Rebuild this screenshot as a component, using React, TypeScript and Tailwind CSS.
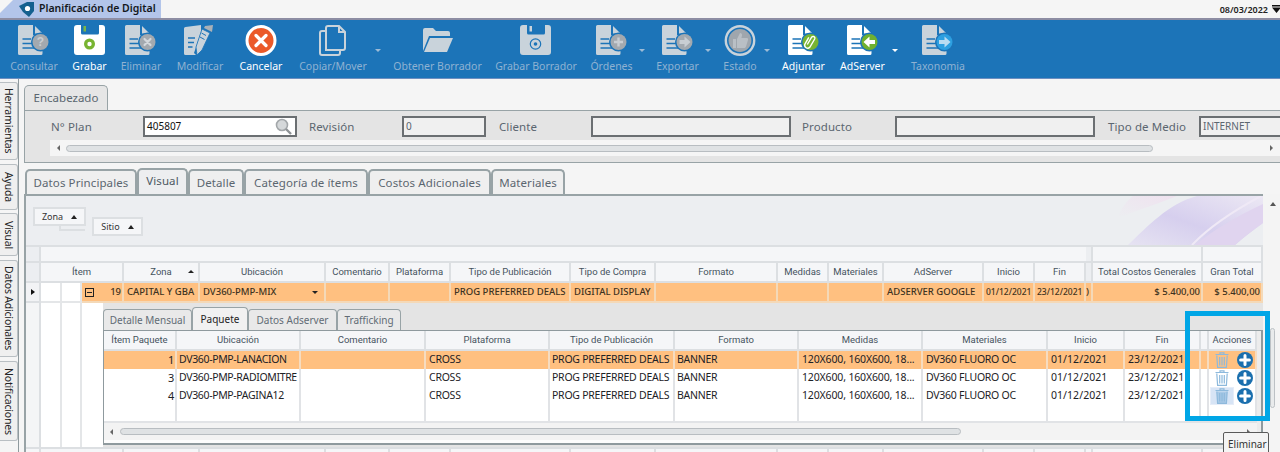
import React from "react";

const OFF = "#c9d3db";
const BLUE = "#1c74b8";

function Doc({ color, children }: { color: string; children?: React.ReactNode }) {
  return (
    <svg width="32" height="31" viewBox="0 0 32 31">
      <path d="M1.5 0H15V10H24.5V28.5a1.5 1.5 0 0 1-1.5 1.5H1.5A1.5 1.5 0 0 1 0 28.5V1.5A1.5 1.5 0 0 1 1.5 0z" fill={color} />
      <path d="M17 1L24.5 8.5H17z" fill={color} />
      <path d="M4.5 14H13M4.5 18.5H15M4.5 23H18" stroke={BLUE} strokeWidth="1.6" />
      <circle cx="22.5" cy="17" r="9.5" fill={BLUE} />
      {children}
    </svg>
  );
}

function IconConsultar() {
  return (
    <Doc color={OFF}>
      <circle cx="22.5" cy="17" r="8" fill="#a3a9af" />
      <text x="22.5" y="21" textAnchor="middle" fontSize="12" fontWeight="700" fill="#c9ced3" fontFamily="Liberation Sans, sans-serif">?</text>
    </Doc>
  );
}
function IconEliminar() {
  return (
    <Doc color={OFF}>
      <circle cx="22.5" cy="17" r="8" fill="#a3a9af" />
      <path d="M19.5 14l6 6M25.5 14l-6 6" stroke="#d4d8dc" strokeWidth="2.2" strokeLinecap="round" />
    </Doc>
  );
}
function IconOrdenes() {
  return (
    <Doc color={OFF}>
      <circle cx="22.5" cy="17" r="8" fill="#a3a9af" />
      <path d="M22.5 12.5v9M18 17h9" stroke="#c9ced3" strokeWidth="2.4" />
    </Doc>
  );
}
function IconExportar() {
  return (
    <Doc color={OFF}>
      <circle cx="22.5" cy="17" r="8" fill="#a3a9af" />
      <path d="M17.5 15h5v-3.5l6 5.5-6 5.5V19h-5z" fill="#c9ced3" />
    </Doc>
  );
}
function IconAdjuntar() {
  return (
    <Doc color="#ffffff">
      <circle cx="22.5" cy="17" r="8" fill="#78b431" />
      <path d="M20.5 20.5l4.5-7.5a1.8 1.8 0 0 1 3 1.8l-5 8.5a3 3 0 0 1-5-3l4-7" fill="none" stroke="#ffffff" strokeWidth="1.4" transform="translate(-1.2 -1)" />
    </Doc>
  );
}
function IconAdServer() {
  return (
    <Doc color="#ffffff">
      <circle cx="22.5" cy="17" r="8" fill="#6fb02f" />
      <path d="M28 15h-5.5v-3.5L16.5 17l6 5.5V19H28z" fill="#ffffff" />
    </Doc>
  );
}
function IconTaxonomia() {
  return (
    <Doc color={OFF}>
      <circle cx="22.5" cy="17" r="8" fill="#2d9fe0" />
      <path d="M17 15h5.5v-3.5l6 5.5-6 5.5V19H17z" fill="#b9dcf2" />
    </Doc>
  );
}
function IconModificar() {
  return (
    <svg width="32" height="31" viewBox="0 0 32 31">
      <path d="M1.5 2L17 0V7L10 28 12 30H1.5A1.5 1.5 0 0 1 0 28.5V3.5A1.5 1.5 0 0 1 1.5 2z" fill={OFF} />
      <path d="M4 13H11M4 17.5H10M4 22H8.5" stroke={BLUE} strokeWidth="1.6" />
      <path d="M18 4L26 8 18 25 13 30 12 22z" fill={OFF} stroke={BLUE} strokeWidth="0.8" />
      <path d="M21 1L29 0 28 7 20 3z" fill="#a9b1b8" />
      <path d="M17.5 8L22 10.5M16 12L20.5 14.5" stroke={BLUE} strokeWidth="1" />
    </svg>
  );
}
function IconFloppy({ white }: { white?: boolean }) {
  const c = white ? "#ffffff" : OFF;
  return (
    <svg width="32" height="31" viewBox="0 0 32 31">
      <path d="M3 0H7V8a1.5 1.5 0 0 0 1.5 1.5H23.5A1.5 1.5 0 0 0 25 8V0H28A3 3 0 0 1 31 3V27A3 3 0 0 1 28 30H3A3 3 0 0 1 0 27V3A3 3 0 0 1 3 0z" fill={c} />
      <rect x="9.5" y="1" width="2.5" height="5.5" fill={white ? "#7ab648" : OFF} />
      {white ? (
        <>
          <circle cx="15.5" cy="19" r="5.5" fill="#78b431" />
          <circle cx="15.5" cy="19" r="2.2" fill="#ffffff" />
        </>
      ) : (
        <>
          <circle cx="15.5" cy="19" r="5.2" fill="none" stroke={BLUE} strokeWidth="1.2" />
          <circle cx="15.5" cy="19" r="1.8" fill={BLUE} />
        </>
      )}
    </svg>
  );
}
function IconCancelar() {
  return (
    <svg width="32" height="31" viewBox="0 0 32 31">
      <circle cx="16" cy="15.5" r="14" fill="#eb5a2a" stroke="#ffffff" strokeWidth="3" />
      <path d="M11 10.5l10 10M21 10.5l-10 10" stroke="#ffffff" strokeWidth="3.2" strokeLinecap="round" />
    </svg>
  );
}
function IconCopiar() {
  return (
    <svg width="28" height="31" viewBox="0 0 28 31" fill="none" stroke={OFF} strokeWidth="2">
      <path d="M7 25V3a2 2 0 0 1 2-2H20L26 7V23a2 2 0 0 1-2 2z" />
      <path d="M20 1V7H26" />
      <path d="M7 6H3a2 2 0 0 0-2 2V28a2 2 0 0 0 2 2H19a2 2 0 0 0 2-2V25" />
    </svg>
  );
}
function IconFolder() {
  return (
    <svg width="32" height="31" viewBox="0 0 32 31">
      <path d="M1 26V5a2 2 0 0 1 2-2H11L14 6H26a2 2 0 0 1 2 2V11H7L1 26z" fill={OFF} />
      <path d="M8 13H31L25 27H2z" fill={OFF} />
    </svg>
  );
}
function IconEstado() {
  return (
    <svg width="32" height="31" viewBox="0 0 32 31">
      <circle cx="16" cy="15.5" r="14.2" fill="none" stroke={OFF} strokeWidth="2.4" />
      <circle cx="16" cy="15.5" r="11.4" fill="#9fa6ad" />
      <path d="M9 14h3v9H9zM13 14l3-6c1.5 0 2.3 1 2 2.5l-.6 2.5H23c1 0 1.4 1 1 2l-2 6.5c-.2.8-.8 1.5-1.7 1.5H13z" fill="#b9bfc5" />
    </svg>
  );
}

type Tool = { label: string; w: string; on?: boolean; caret?: boolean; icon: React.ReactNode };
const tools: Tool[] = [
  { label: "Consultar", w: "w-[48px]", icon: <IconConsultar /> },
  { label: "Grabar", w: "w-[33px]", on: true, icon: <IconFloppy white /> },
  { label: "Eliminar", w: "w-[40px]", icon: <IconEliminar /> },
  { label: "Modificar", w: "w-[48px]", icon: <IconModificar /> },
  { label: "Cancelar", w: "w-[44px]", on: true, icon: <IconCancelar /> },
  { label: "Copiar/Mover", w: "w-[70px] mr-[11px]", caret: true, icon: <IconCopiar /> },
  { label: "Obtener Borrador", w: "w-[87px]", icon: <IconFolder /> },
  { label: "Grabar Borrador", w: "w-[80px]", icon: <IconFloppy /> },
  { label: "Órdenes", w: "w-[41px] mr-[10px]", caret: true, icon: <IconOrdenes /> },
  { label: "Exportar", w: "w-[41px] mr-[10px]", caret: true, icon: <IconExportar /> },
  { label: "Estado", w: "w-[34px] mr-[10px]", caret: true, icon: <IconEstado /> },
  { label: "Adjuntar", w: "w-[43px]", on: true, icon: <IconAdjuntar /> },
  { label: "AdServer", w: "w-[45px] mr-[10px]", on: true, caret: true, icon: <IconAdServer /> },
  { label: "Taxonomia", w: "w-[56px]", icon: <IconTaxonomia /> },
];

function TopBar() {
  return (
    <div className="h-[18px] flex items-start justify-between bg-[#f5f5f5]">
      <div className="h-[18px] w-[161px] bg-[#b3c5ea] [clip-path:polygon(0_13px,13px_0,100%_0,100%_100%,0_100%)] flex items-center pl-[19px] gap-[5px]">
        <svg width="15" height="15" viewBox="0 0 15 15">
          <path d="M0 4L8 0H15V9L10 15L4 10z" fill="#14608f" />
          <circle cx="8.5" cy="6.5" r="2.6" fill="#ffffff" />
        </svg>
        <span className="text-[10.5px] font-semibold text-[#14181c] whitespace-nowrap">Planificación de Digital</span>
      </div>
      <div className="flex items-center h-[18px] gap-[4px]">
        <span className="text-[9px] text-[#222] font-semibold mt-[1px]">08/03/2022</span>
        <svg width="9" height="8" viewBox="0 0 9 8" className="-mr-[1px]">
          <path d="M0 0H9V1.5H0zM0 2.5H9L4.5 8z" fill="#111" />
        </svg>
      </div>
    </div>
  );
}

function Toolbar() {
  return (
    <div className="h-[61px] bg-[#1c74b8] border-t-2 border-b border-t-[#8d8da3] border-b-[#6d8fc0] flex pl-[10px] gap-[15px] pt-[5px]">
      {tools.map((t) => (
        <div key={t.label} className={`relative ${t.w} shrink-0 flex flex-col items-center`}>
          <div className="h-[31px] flex items-center justify-center">{t.icon}</div>
          <div className={`mt-[3px] text-[10.5px] leading-[15px] whitespace-nowrap ${t.on ? "text-white" : "text-[#8fb2d2]"}`}>{t.label}</div>
          {t.caret && (
            <span className={`absolute right-[-13px] top-[24px] w-0 h-0 border-x-[3px] border-x-transparent border-t-[3px] ${t.on ? "border-t-white" : "border-t-[#9dbbd6]"}`} />
          )}
        </div>
      ))}
    </div>
  );
}

function SideTab({ label, h }: { label: string; h: string }) {
  return (
    <div className={`${h} w-[18px] bg-[#efefef] border border-l-0 border-[#b9bfc3] rounded-r-[3px] flex items-center justify-center [writing-mode:vertical-rl]`}>
      <span className="text-[10.5px] tracking-[-0.2px] text-[#222] whitespace-nowrap">{label}</span>
    </div>
  );
}

function Sidebar() {
  return (
    <div className="w-[19px] shrink-0 border-r border-[#8f9a9e] pt-[3px] flex flex-col">
      <SideTab label="Herramientas" h="h-[78px]" />
      <div className="h-[4px]" />
      <SideTab label="Ayuda" h="h-[46px]" />
      <div className="h-[3px]" />
      <SideTab label="Visual" h="h-[43px]" />
      <div className="h-[4px]" />
      <SideTab label="Datos Adicionales" h="h-[97px]" />
      <div className="h-[4px]" />
      <SideTab label="Notificaciones" h="h-[80px]" />
    </div>
  );
}

function HScroll({ left, width, strip }: { left: string; width: string; strip: string }) {
  return (
    <div className={`flex items-center ${strip}`}>
      <span className={`w-0 h-0 border-y-[3px] border-y-transparent border-r-[3px] border-r-[#666] ${left}`} />
      <div className={`h-[7px] ${width} rounded-full bg-[#dfe2e4] border border-[#b8bdc1]`} />
      <span className="ml-auto w-0 h-0 border-y-[3px] border-y-transparent border-l-[3px] border-l-[#666] mr-[7px]" />
    </div>
  );
}

const labelCls = "text-[11.5px] tracking-[0.1px] text-[#5b6670] whitespace-nowrap";
const inputCls = "h-[21px] border-2 border-[#6b6f72] bg-[#f0f0f0] text-[10px] text-[#5b6670] pl-[2px] flex items-center shrink-0";

function Encabezado() {
  return (
    <div className="pl-[5px] pt-[6px]">
      <div className="w-[84px] h-[25px] bg-[#e6e6e6] border border-b-0 border-[#98a3a6] rounded-t-[5px] flex items-center justify-center">
        <span className="text-[11.5px] text-[#5b6670]">Encabezado</span>
      </div>
      <div className="h-[53px] bg-[#e4e4e4] border-t border-b border-l border-[#98a3a6]">
        <div className="h-[29px] pt-[2px] flex items-center pl-[26px]">
          <span className={`${labelCls} w-[92px]`}>N° Plan</span>
          <div className={`${inputCls} w-[154px] bg-white text-[#111] justify-between pr-[3px]`}>
            <span className="text-[10px]">405807</span>
            <svg width="17" height="17" viewBox="0 0 17 17">
              <circle cx="7" cy="7" r="5.5" fill="#d5d8da" stroke="#a3a7aa" strokeWidth="1.6" />
              <path d="M11 11l5 5" stroke="#8e9295" strokeWidth="2.4" />
            </svg>
          </div>
          <span className={`${labelCls} w-[93px] ml-[12px]`}>Revisión</span>
          <div className={`${inputCls} w-[84px]`}>0</div>
          <span className={`${labelCls} w-[92px] ml-[13px]`}>Cliente</span>
          <div className={`${inputCls} w-[200px]`} />
          <span className={`${labelCls} w-[93px] ml-[11px]`}>Producto</span>
          <div className={`${inputCls} w-[200px]`} />
          <span className={`${labelCls} w-[91px] ml-[13px]`}>Tipo de Medio</span>
          <div className={`${inputCls} w-[81px] border-r-0`}>INTERNET</div>
        </div>
        <HScroll strip="h-[16px] ml-[25px] bg-[#f5f5f5]" left="ml-[7px] mr-[6px]" width="w-[1087px]" />
      </div>
    </div>
  );
}

const mainTabs = [
  { t: "Datos Principales", w: "w-[112px]" },
  { t: "Visual", w: "w-[51px]", on: true },
  { t: "Detalle", w: "w-[56px]" },
  { t: "Categoría de ítems", w: "w-[124px]" },
  { t: "Costos Adicionales", w: "w-[123px]" },
  { t: "Materiales", w: "w-[74px]" },
];

const MCOLS = "grid-cols-[15px_83px_76px_126px_64px_61px_120px_85px_122px_51px_55px_100px_51px_51px_7px_110px_60px]";
const ICOLS = "grid-cols-[73px_124px_125px_124px_125px_124px_124px_125px_77px_76px_8px_48px]";

const mHeaders = ["", "Ítem", "Zona", "Ubicación", "Comentario", "Plataforma", "Tipo de Publicación", "Tipo de Compra", "Formato", "Medidas", "Materiales", "AdServer", "Inicio", "Fin", "", "Total Costos Generales", "Gran Total"];
const iHeaders = ["Ítem Paquete", "Ubicación", "Comentario", "Plataforma", "Tipo de Publicación", "Formato", "Medidas", "Materiales", "Inicio", "Fin", "", "Acciones"];

const hCell = "h-full border-r-2 border-b-2 border-[#dcdfe2] flex items-center justify-center [font-family:Roboto,sans-serif] text-[9.5px] text-[#45535e] whitespace-nowrap overflow-hidden";

function MasterCell({ children, cls = "" }: { children?: React.ReactNode; cls?: string }) {
  return (
    <div className={`h-full border-r-2 border-b-2 border-[#f4d9b8] bg-[#ffc080] flex items-center text-[9.5px] font-medium text-[#3d3221] whitespace-nowrap overflow-hidden ${cls}`}>
      {children}
    </div>
  );
}

function Trash({ hot }: { hot?: boolean }) {
  return (
    <div className={`w-[24px] h-[18px] flex items-center justify-center ${hot ? "bg-[#d7e4f5] border border-[#e6edf8]" : ""}`}>
      <svg width="14" height="16" viewBox="0 0 14 16" fill="none" stroke="#8db9dc" strokeWidth="1.2">
        <path d="M0.5 2.5H13.5M5 2.5V0.8H9V2.5" />
        <path d="M1.8 3.5L2.6 15.3H11.4L12.2 3.5" fill={hot ? "#a9c9e6" : "none"} />
        <path d="M4.7 5V13.5M7 5V13.5M9.3 5V13.5" />
      </svg>
    </div>
  );
}

function PlusCircle() {
  return (
    <svg width="16" height="16" viewBox="0 0 16 16" className="ml-[3px]">
      <circle cx="8" cy="8" r="8" fill="#1a6fae" />
      <path d="M8 3.6V12.4M3.6 8H12.4" stroke="#ffffff" strokeWidth="3" strokeLinecap="round" />
    </svg>
  );
}

const rows = [
  { n: "1", u: "DV360-PMP-LANACION", on: true },
  { n: "3", u: "DV360-PMP-RADIOMITRE" },
  { n: "4", u: "DV360-PMP-PAGINA12", hot: true },
];

function InnerCell({ children, on, cls = "" }: { children?: React.ReactNode; on?: boolean; cls?: string }) {
  return (
    <div className={`h-full border-r-2 border-b-2 flex items-center text-[10.5px] tracking-[-0.25px] text-[#1d2226] whitespace-nowrap overflow-hidden ${on ? "bg-[#ffc080] border-[#f6dcc0]" : "bg-white border-[#e1e3e6]"} ${cls}`}>
      {children}
    </div>
  );
}

function DetailPanel() {
  const detailTabs = [
    { t: "Detalle Mensual", w: "w-[89px]" },
    { t: "Paquete", w: "w-[56px]", on: true },
    { t: "Datos Adserver", w: "w-[89px]" },
    { t: "Trafficking", w: "w-[64px]" },
  ];
  return (
    <div className="w-[1160px] h-[144px] bg-[#e4e4e4] shrink-0">
      <div className="h-[27px] flex items-end">
        {detailTabs.map((d) => (
          <div key={d.t} className={`${d.w} ${d.on ? "h-[23px] bg-[#f1f1f1] text-[#222]" : "h-[21px] bg-[#e9e9e9] text-[#626c75]"} border border-b-0 border-[#98a3a6] rounded-t-[4px] flex items-center justify-center text-[10px] whitespace-nowrap`}>
            {d.t}
          </div>
        ))}
      </div>
      <div className="h-[115px] w-[1160px] border-t border-l border-b-2 border-r-2 border-[#8f9a9e] flex">
        <div className="w-[1153px] shrink-0 bg-[#fdfdfd]">
          <div className={`grid ${ICOLS} h-[20px] bg-[#f5f6f8]`}>
            {iHeaders.map((h, i) => (
              <div key={i} className={hCell}>{h}</div>
            ))}
          </div>
          {rows.map((r) => (
            <div key={r.n} className={`grid ${ICOLS} h-[18px]`}>
              <InnerCell on={r.on} cls="justify-end pr-[1px]"><span className="text-[11px]">{r.n}</span></InnerCell>
              <InnerCell on={r.on} cls="pl-[2px] !tracking-[-0.35px]">{r.u}</InnerCell>
              <InnerCell on={r.on} />
              <InnerCell on={r.on} cls="pl-[3px]">CROSS</InnerCell>
              <InnerCell on={r.on} cls="pl-[2px]">PROG PREFERRED DEALS</InnerCell>
              <InnerCell on={r.on} cls="pl-[2px]">BANNER</InnerCell>
              <InnerCell on={r.on} cls="pl-[3px] !tracking-[-0.15px]">120X600, 160X600, 18...</InnerCell>
              <InnerCell on={r.on} cls="pl-[3px]">DV360 FLUORO OC</InnerCell>
              <InnerCell on={r.on} cls="pl-[3px] !tracking-[0.05px]">01/12/2021</InnerCell>
              <InnerCell on={r.on} cls="pl-[3px] !tracking-[0.05px]">23/12/2021</InnerCell>
              <InnerCell on={r.on} />
              <InnerCell on={r.on} cls="pl-[1px] !overflow-visible"><Trash hot={r.hot} /><PlusCircle /></InnerCell>
            </div>
          ))}
          <div className={`grid ${ICOLS} h-[18px]`}>
            {iHeaders.map((h, i) => (
              <InnerCell key={i} />
            ))}
          </div>
          <HScroll strip="h-[17px] bg-[#f3f3f3]" left="ml-[6px] mr-[7px]" width="w-[841px]" />
        </div>
        <div className="flex-1 bg-[#ececec]" />
      </div>
    </div>
  );
}

function Visual() {
  return (
    <div className="pl-[5px] pt-[5px]">
      <div className="flex items-end h-[26px] pl-px">
        {mainTabs.map((m) => (
          <div key={m.t} className={`${m.w} ${m.on ? "h-[26px] bg-[#edeef0] text-[#4e5963] pb-[2px]" : "h-[25px] bg-[#efefef] text-[#5b6670]"} border-2 border-b-0 border-[#98a3a6] rounded-t-[5px] flex items-center justify-center text-[11.5px] tracking-[0.1px] whitespace-nowrap`}>
            {m.t}
          </div>
        ))}
      </div>
      <div className="flex">
        <div className="w-[1239px] shrink-0 border-t-2 border-l-2 border-[#98a3a6]">
          <div className="relative h-[49px] bg-[#eceef1] flex items-start pl-[7px] overflow-hidden">
            <svg className="absolute right-0 top-0" width="190" height="49" viewBox="0 0 190 49">
              <defs>
                <linearGradient id="wmA" x1="0" y1="1" x2="1" y2="0">
                  <stop offset="0" stopColor="#e6e3f2" />
                  <stop offset="0.45" stopColor="#d6cfee" />
                  <stop offset="1" stopColor="#ece8f4" />
                </linearGradient>
                <linearGradient id="wmB" x1="0" y1="1" x2="1" y2="0">
                  <stop offset="0" stopColor="#eceef1" />
                  <stop offset="1" stopColor="#efe2ef" />
                </linearGradient>
              </defs>
              <path d="M45 22C65 14 90 6 104 0H60C50 8 47 16 45 22z" fill="url(#wmB)" />
              <path d="M55 49C75 30 95 8 124 0H190V27C180 34 170 42 162 49z" fill="url(#wmA)" />
              <path d="M119 49C135 32 160 15 188 0" fill="none" stroke="#efe9f6" strokeWidth="2" />
              <path d="M122 49C140 34 165 20 190 8V27C180 34 170 42 162 49z" fill="#e0d4ef" />
            </svg>
            <div className="relative w-[53px] h-[19px] mt-[11px] bg-[#f5f6f8] border-2 border-[#dcdfe2] flex items-center justify-center gap-[8px] text-[9px] text-[#333]">
              Zona<span className="w-0 h-0 border-x-[3px] border-x-transparent border-b-[4px] border-b-[#222]" />
            </div>
            <div className="absolute left-[33px] top-[30px] w-[26px] h-[5px] border-l-2 border-b-2 border-[#dcdfe2]" />
            <div className="relative w-[51px] h-[19px] mt-[21px] ml-[6px] bg-[#f5f6f8] border-2 border-[#dcdfe2] flex items-center justify-center gap-[8px] text-[9px] text-[#333]">
              Sitio<span className="w-0 h-0 border-x-[3px] border-x-transparent border-b-[4px] border-b-[#222]" />
            </div>
          </div>
          <div className={`grid ${MCOLS} h-[18px] bg-[#f5f6f8] border-t-2 border-[#dcdfe2]`}>
            {mHeaders.map((h, i) => (
              <div key={i} className={`${hCell} ${i === 0 || i === 14 ? "bg-[#eceef1]" : ""} ${i > 0 && i < 14 ? "!border-r-0" : ""}`} />
            ))}
          </div>
          <div className={`grid ${MCOLS} h-[20px] bg-[#f5f6f8]`}>
            {mHeaders.map((h, i) => (
              <div key={i} className={`${hCell} ${i === 0 || i === 14 ? "bg-[#eceef1]" : ""}`}>
                {i === 2 ? (
                  <span className="relative w-full text-center">
                    {h}
                    <span className="absolute right-[4px] top-[5px] w-0 h-0 border-x-[3px] border-x-transparent border-b-[3px] border-b-[#222]" />
                  </span>
                ) : (
                  h
                )}
              </div>
            ))}
          </div>
          <div className={`grid ${MCOLS} h-[20px]`}>
            <div className="h-full bg-[#f2f3f5] border-r-2 border-b-2 border-[#dcdfe2] flex items-center justify-center">
              <span className="w-0 h-0 border-y-[3px] border-y-transparent border-l-[4px] border-l-[#111]" />
            </div>
            <div className="h-full flex">
              <div className="w-[21px] bg-white border-r-2 border-b-2 border-[#e4e6e8]" />
              <div className="w-[20px] bg-white border-r-2 border-b-2 border-[#e4e6e8]" />
              <div className="flex-1 bg-[#ffc080] border-r-2 border-b-2 border-[#f4d9b8] flex items-center justify-between pl-[3px] pr-[1px]">
                <span className="w-[9px] h-[9px] border border-[#222] flex items-center justify-center">
                  <span className="w-[5px] h-px bg-[#222]" />
                </span>
                <span className="text-[9.5px] font-medium text-[#3d3221]">19</span>
              </div>
            </div>
            <MasterCell cls="pl-[3px]">CAPITAL Y GBA</MasterCell>
            <MasterCell cls="pl-[3px] justify-between pr-[6px]">
              DV360-PMP-MIX
              <span className="w-0 h-0 border-x-[3px] border-x-transparent border-t-[3px] border-t-[#222]" />
            </MasterCell>
            <MasterCell />
            <MasterCell />
            <MasterCell cls="pl-[3px]">PROG PREFERRED DEALS</MasterCell>
            <MasterCell cls="pl-[3px]">DIGITAL DISPLAY</MasterCell>
            <MasterCell />
            <MasterCell />
            <MasterCell />
            <MasterCell cls="pl-[3px]">ADSERVER GOOGLE</MasterCell>
            <MasterCell cls="pl-[2px] !text-[8.5px]">01/12/2021</MasterCell>
            <MasterCell cls="pl-[2px] !text-[8.5px]">23/12/2021</MasterCell>
            <MasterCell>)</MasterCell>
            <MasterCell cls="justify-end pr-[1px]">$ 5.400,00</MasterCell>
            <MasterCell cls="justify-end pr-[1px]">$ 5.400,00</MasterCell>
          </div>
          <div className="flex h-[144px]">
            <div className="w-[15px] shrink-0 bg-[#f4f5f6] border-r-2 border-[#dcdfe2]" />
            <div className="w-[21px] shrink-0 bg-white border-r-2 border-[#e4e6e8]" />
            <div className="w-[20px] shrink-0 bg-white border-r-2 border-[#e4e6e8]" />
            <div className="w-[21px] shrink-0 bg-white" />
            <DetailPanel />
          </div>
          <div className={`grid ${MCOLS} h-[6px] bg-[#f5f6f8]`}>
            {mHeaders.map((h, i) => (
              <div key={i} className="h-full border-r-2 border-t-2 border-[#dcdfe2]" />
            ))}
          </div>
        </div>
        <div className="flex-1 bg-[#f4f4f4] pt-[8px] pl-[7px] h-[260px]">
          <span className="block w-0 h-0 border-x-[3px] border-x-transparent border-b-[4px] border-b-[#555]" />
          <div className="mt-[122px] w-[5px] h-[80px] rounded-full bg-[#e9ebec] border border-[#bcc1c5]" />
        </div>
      </div>
    </div>
  );
}

export default function App() {
  return (
    <div className="relative w-[1280px] h-[452px] overflow-hidden bg-[#f5f5f5] [font-family:'Noto_Sans',sans-serif]">
      <TopBar />
      <Toolbar />
      <div className="flex h-[373px]">
        <Sidebar />
        <div className="flex-1 min-w-0">
          <Encabezado />
          <Visual />
        </div>
      </div>
      <div className="absolute left-[1185px] top-[311px] w-[85px] h-[110px] border-[5px] border-[#00a6e6]" />
      <div className="absolute left-[1223px] top-[432px] w-[46px] h-[24px] bg-[#f4f4f4] border border-[#5a5a5a] rounded-[2px] pl-[4px] pt-[4px] text-[10px] leading-[14px] text-[#333]">
        Eliminar
      </div>
    </div>
  );
}
